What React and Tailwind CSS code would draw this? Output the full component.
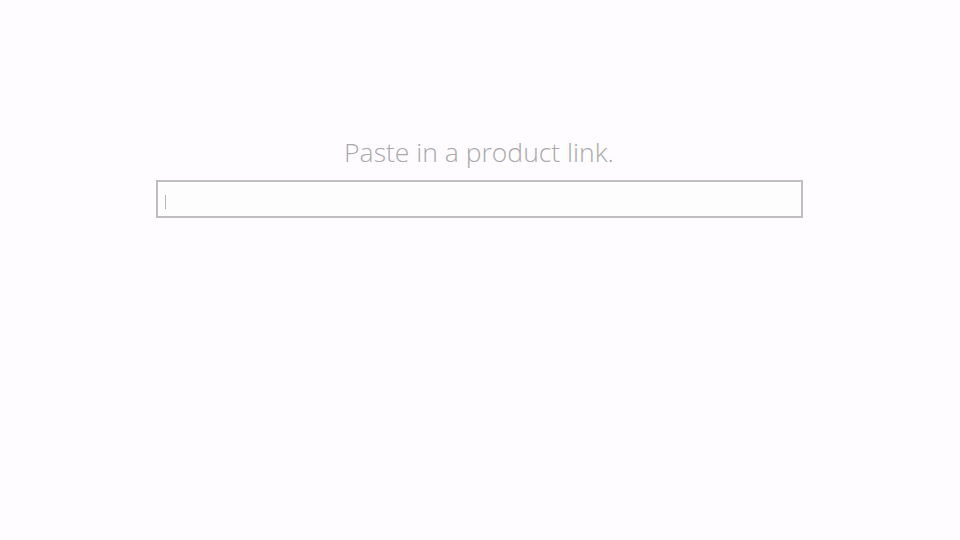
import React from 'react';

const App = () => {
  return (
    <div className="min-h-screen w-full bg-[#fefcfe] flex flex-col items-center pt-[134px]" style={{ fontFamily: '"Open Sans", "Liberation Sans", sans-serif' }}>
      <h1 className="text-[26.5px] font-light text-[#a9a9ab] leading-[36px] ml-[-2px]">Paste in a product link.</h1>
      <div className="mt-[10px] w-[647px] h-[38px] border-2 border-[#bebebe] bg-[#fefdfe] flex items-start pt-[13px] pl-[7px] ml-[-2px]">
        <span className="w-px h-[14px] bg-[#b8b8b8]" />
      </div>
    </div>
  );
};

export default App;
